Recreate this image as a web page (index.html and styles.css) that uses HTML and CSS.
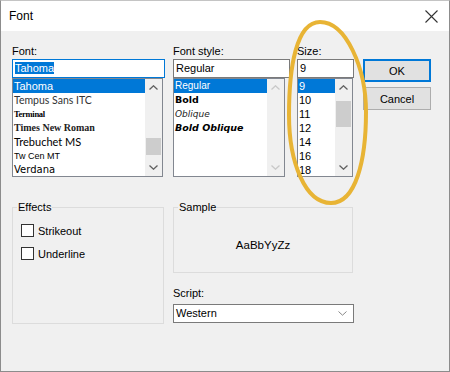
FILE: index.html
```html
<!DOCTYPE html>
<html lang="en">
<head>
  <meta charset="UTF-8" />
  <title>Font</title>
  <link rel="stylesheet" href="styles.css">
</head>
<body>
  <div class="dialog">
    <!-- Title bar -->
    <div class="titlebar">
      <span class="title">Font</span>
      <svg class="close" width="13" height="13" viewBox="0 0 13 13">
        <path d="M0.5 0.5 L12.5 12.5 M12.5 0.5 L0.5 12.5" stroke="#333" stroke-width="1.1" fill="none" />
      </svg>
    </div>

    <div class="content">
      <!-- Font / style / size pickers -->
      <div class="top">
        <div class="col col-font">
          <div class="label">Font:</div>
          <div class="field focused"><span class="sel">Tahoma</span></div>
          <div class="list list-font">
            <ul class="items">
              <li class="selected">Tahoma</li>
              <li class="f-tempus">Tempus Sans ITC</li>
              <li class="f-terminal">Terminal</li>
              <li class="f-times">Times New Roman</li>
              <li class="f-trebuchet">Trebuchet MS</li>
              <li class="f-twcen">Tw Cen MT</li>
              <li class="f-verdana">Verdana</li>
            </ul>
            <div class="scrollbar">
              <span class="arrow"><svg width="9" height="5" viewBox="0 0 9 5"><path d="M0.5 4.5 L4.5 0.8 L8.5 4.5" /></svg></span>
              <span class="thumb thumb-font"></span>
              <span class="arrow down"><svg width="9" height="5" viewBox="0 0 9 5"><path d="M0.5 0.5 L4.5 4.2 L8.5 0.5" /></svg></span>
            </div>
          </div>
        </div>

        <div class="col col-style">
          <div class="label">Font style:</div>
          <div class="field">Regular</div>
          <div class="list list-style">
            <ul class="items">
              <li class="selected s-regular">Regular</li>
              <li class="s-bold">Bold</li>
              <li class="s-oblique">Oblique</li>
              <li class="s-boldoblique">Bold Oblique</li>
            </ul>
            <div class="scrollbar disabled">
              <span class="arrow"><svg width="9" height="5" viewBox="0 0 9 5"><path d="M0.5 4.5 L4.5 0.8 L8.5 4.5" /></svg></span>
              <span class="arrow down"><svg width="9" height="5" viewBox="0 0 9 5"><path d="M0.5 0.5 L4.5 4.2 L8.5 0.5" /></svg></span>
            </div>
          </div>
        </div>

        <div class="col col-size">
          <div class="label">Size:</div>
          <div class="field">9</div>
          <div class="list list-size">
            <ul class="items">
              <li class="selected">9</li>
              <li>10</li>
              <li>11</li>
              <li>12</li>
              <li>14</li>
              <li>16</li>
              <li>18</li>
            </ul>
            <div class="scrollbar">
              <span class="arrow"><svg width="9" height="5" viewBox="0 0 9 5"><path d="M0.5 4.5 L4.5 0.8 L8.5 4.5" /></svg></span>
              <span class="thumb thumb-size"></span>
              <span class="arrow down"><svg width="9" height="5" viewBox="0 0 9 5"><path d="M0.5 0.5 L4.5 4.2 L8.5 0.5" /></svg></span>
            </div>
          </div>
        </div>

        <div class="buttons">
          <button class="btn default">OK</button>
          <button class="btn">Cancel</button>
        </div>
      </div>

      <!-- Effects / sample / script -->
      <div class="bottom">
        <fieldset class="group effects">
          <legend>Effects</legend>
          <label class="check"><span class="box"></span>Strikeout</label>
          <label class="check"><span class="box"></span>Underline</label>
        </fieldset>

        <div class="right">
          <fieldset class="group sample">
            <legend>Sample</legend>
            <div class="sample-text">AaBbYyZz</div>
          </fieldset>
          <div class="label script-label">Script:</div>
          <div class="field select">
            <span>Western</span>
            <svg width="9" height="5" viewBox="0 0 9 5"><path d="M0.5 0.5 L4.5 4.2 L8.5 0.5" stroke="#888" fill="none" /></svg>
          </div>
        </div>
      </div>
    </div>

    <!-- yellow annotation ring around the Size column -->
    <svg class="ring" width="450" height="372" viewBox="0 0 450 372">
      <path d="M320 22 C346 22 366 68 366 112 C366 160 356 203 331 203 C305 203 289 162 289 115 C289 68 296 22 320 22 Z" />
    </svg>
  </div>
</body>
</html>
```

FILE: styles.css
```css
body {
  margin: 0;
  font-family: "Liberation Sans", Arial, sans-serif;
  font-size: 11px;
  color: #000;
}

.dialog {
  position: relative;
  width: 450px;
  height: 372px;
  box-sizing: border-box;
  background: #f0f0f0;
  border: 1px solid #8c8c8c;
  border-top-color: #c4c4c4;
  overflow: hidden;
}

.titlebar {
  height: 30px;
  background: #fff;
  display: flex;
  align-items: center;
  justify-content: space-between;
  padding: 0 11px 0 8px;
}

.title {
  font-size: 12px;
}

.close {
  margin-top: 1px;
}

.content {
  padding: 12px 0 0 11px;
}

.top {
  display: flex;
}

.col-font {
  width: 153px;
  margin-right: 8px;
}

.col-style {
  width: 117px;
  margin-right: 7px;
}

.col-size {
  width: 57px;
  margin-right: 9px;
}

.label {
  height: 16px;
  line-height: 16px;
}

.field {
  height: 19px;
  box-sizing: border-box;
  border: 1px solid #7a7a7a;
  background: #fff;
  padding-left: 2px;
  line-height: 17px;
  white-space: nowrap;
  overflow: hidden;
}

.field.focused {
  border-color: #0078d7;
}

.field .sel {
  background: #0078d7;
  color: #fff;
}

.list {
  height: 99px;
  box-sizing: border-box;
  border: 1px solid #828790;
  background: #fff;
  display: flex;
}

.list-font {
  width: 151px;
}

.list-style {
  width: 112px;
}

.list-size {
  width: 56px;
}

.items {
  flex: 1;
  list-style: none;
  margin: 0;
  padding: 0;
  overflow: hidden;
}

.items li {
  height: 14px;
  line-height: 14px;
  padding-left: 1px;
  white-space: nowrap;
}

.items li.selected {
  background: #0078d7;
  color: #fff;
}

.scrollbar {
  width: 17px;
  background: #f0f0f0;
  display: flex;
  flex-direction: column;
  align-items: center;
}

.arrow {
  width: 17px;
  height: 17px;
  display: flex;
  align-items: center;
  justify-content: center;
}

.arrow svg path {
  fill: none;
  stroke: #606060;
  stroke-width: 1.3;
}

.scrollbar.disabled .arrow svg path {
  stroke: #c8c8c8;
}

.arrow.down {
  margin-top: auto;
}

.thumb {
  width: 15px;
  background: #cdcdcd;
}

.thumb-font {
  margin-top: 42px;
  height: 17px;
}

.thumb-size {
  margin-top: 5px;
  height: 26px;
}

/* list fonts */
.f-tempus {
  font-family: Lato, sans-serif;
  font-size: 10.5px;
  color: #333;
}

.f-terminal {
  font-family: "Liberation Serif", serif;
  font-size: 8.5px;
  font-weight: bold;
  letter-spacing: -0.3px;
}

.f-times {
  font-family: "Liberation Serif", serif;
  font-size: 10px;
  font-weight: bold;
  color: #222;
}

.f-trebuchet {
  font-family: Lato, sans-serif;
  font-size: 11px;
}

.f-twcen {
  font-size: 9px;
}

.f-verdana {
  font-family: "DejaVu Sans", sans-serif;
  font-size: 10px;
}

.s-regular {
  font-size: 10px;
}

.s-bold {
  font-family: "DejaVu Sans", sans-serif;
  font-size: 9.5px;
  font-weight: bold;
}

.s-oblique {
  font-family: "DejaVu Sans", sans-serif;
  font-size: 9px;
  font-style: oblique;
  color: #222;
}

.s-boldoblique {
  font-family: "DejaVu Sans", sans-serif;
  font-size: 9.5px;
  font-weight: bold;
  font-style: oblique;
}

.buttons {
  width: 68px;
  padding-top: 16px;
  display: flex;
  flex-direction: column;
  gap: 5px;
}

.btn {
  height: 23px;
  box-sizing: border-box;
  border: 1px solid #adadad;
  background: #e1e1e1;
  font: inherit;
  color: #000;
  padding: 0;
}

.btn.default {
  border-color: #0078d7;
  box-shadow: inset 0 0 0 1px #0078d7;
}

.bottom {
  display: flex;
  margin-top: 23px;
}

.group {
  margin: 0;
  padding: 0 0 0 4px;
  border: 1px solid #dcdcdc;
  box-sizing: border-box;
  min-width: 0;
}

.group legend {
  padding: 0 1px;
  line-height: 14px;
}

.effects {
  width: 152px;
  height: 124px;
  margin-right: 9px;
}

.check {
  display: flex;
  align-items: center;
  height: 13px;
  margin: 10px 0 0 4px;
}

.box {
  width: 13px;
  height: 13px;
  box-sizing: border-box;
  border: 1px solid #333;
  background: #fff;
  margin-right: 4px;
}

.right {
  width: 181px;
}

.sample {
  width: 180px;
  height: 73px;
  padding-right: 4px;
}

.sample-text {
  text-align: center;
  line-height: 16px;
  padding-top: 23px;
  font-size: 11.5px;
}

.script-label {
  margin-top: 12px;
}

.select {
  margin-top: 3px;
  display: flex;
  align-items: center;
  justify-content: space-between;
  padding-right: 6px;
}

.ring {
  position: absolute;
  left: -1px;
  top: -1px;
  pointer-events: none;
}

.ring path {
  fill: none;
  stroke: #e8b435;
  stroke-width: 4;
}
```
